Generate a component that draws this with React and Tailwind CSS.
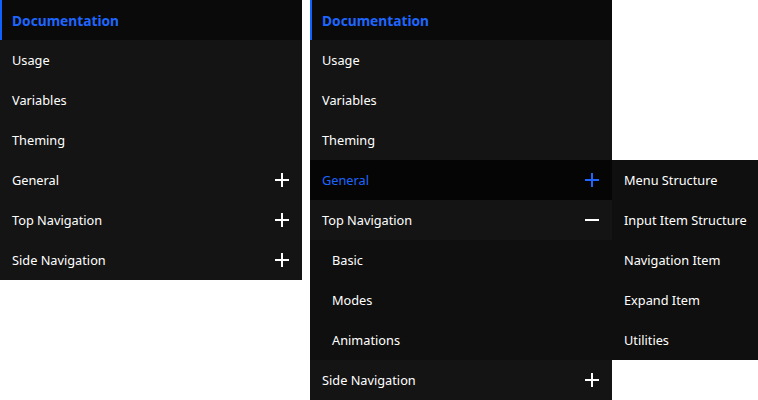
import React from "react";

const font = { fontFamily: '"Noto Sans", "Open Sans", sans-serif' };

function Plus({ color = "#ffffff" }) {
  return (
    <svg width="14" height="14" viewBox="0 0 14 14" className="shrink-0">
      <rect x="6" y="0" width="2" height="14" fill={color} />
      <rect x="0" y="6" width="14" height="2" fill={color} />
    </svg>
  );
}
function Minus({ color = "#ffffff" }) {
  return (
    <svg width="14" height="14" viewBox="0 0 14 14" className="shrink-0">
      <rect x="0" y="6" width="14" height="2" fill={color} />
    </svg>
  );
}

function Row({ label, variant = "normal", icon, indent = false }) {
  const base = "h-10 flex items-center justify-between pr-[13px] text-[12.75px] leading-none";
  if (variant === "active") {
    return (
      <div className={`${base} bg-[#0a0a0a] border-l-2 border-[#0f62fe] pl-[10px]`}>
        <span className="font-bold text-[13.75px] text-[#1f66ff] pt-px">{label}</span>
      </div>
    );
  }
  if (variant === "hover") {
    return (
      <div className={`${base} bg-[#050505] pl-3`}>
        <span className="text-[#1f66ff]">{label}</span>
        {icon === "plus" && <Plus color="#1f66ff" />}
      </div>
    );
  }
  return (
    <div className={`${base} ${indent ? "bg-[#0f0f0f] pl-[22px]" : "bg-[#141414] pl-3"}`}>
      <span className="text-white">{label}</span>
      {icon === "plus" && <Plus />}
      {icon === "minus" && <Minus />}
    </div>
  );
}

export default function App() {
  return (
    <div className="w-[758px] h-[400px] bg-white flex items-start" style={font}>
      <div className="w-[302px] flex flex-col">
        <Row label="Documentation" variant="active" />
        <Row label="Usage" />
        <Row label="Variables" />
        <Row label="Theming" />
        <Row label="General" icon="plus" />
        <Row label="Top Navigation" icon="plus" />
        <Row label="Side Navigation" icon="plus" />
      </div>
      <div className="ml-2 w-[302px] flex flex-col">
        <Row label="Documentation" variant="active" />
        <Row label="Usage" />
        <Row label="Variables" />
        <Row label="Theming" />
        <Row label="General" variant="hover" icon="plus" />
        <Row label="Top Navigation" icon="minus" />
        <Row label="Basic" indent />
        <Row label="Modes" indent />
        <Row label="Animations" indent />
        <Row label="Side Navigation" icon="plus" />
      </div>
      <div className="mt-[160px] w-[146px] flex flex-col bg-[#0f0f0f]">
        {["Menu Structure", "Input Item Structure", "Navigation Item", "Expand Item", "Utilities"].map((t) => (
          <div key={t} className="h-10 flex items-center pl-3 text-[12.75px] leading-none text-white whitespace-nowrap">
            {t}
          </div>
        ))}
      </div>
    </div>
  );
}
